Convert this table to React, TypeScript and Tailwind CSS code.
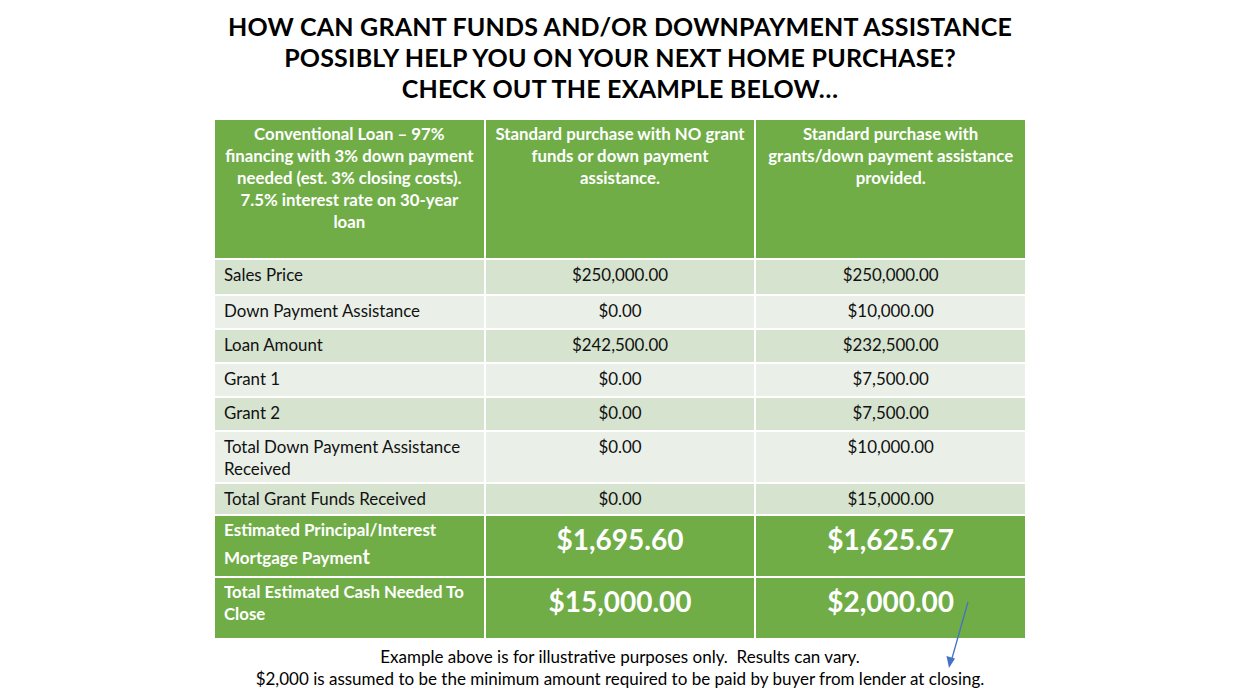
const rows: { label: React.ReactNode; key: string; a: string; b: string; h: string; tone: string }[] = [
  { key: "sp", label: "Sales Price", a: "$250,000.00", b: "$250,000.00", h: "h-[34px]", tone: "bg-[#d5e3cf]" },
  { key: "dpa", label: "Down Payment Assistance", a: "$0.00", b: "$10,000.00", h: "h-[32px]", tone: "bg-[#eaf0e8]" },
  { key: "la", label: "Loan Amount", a: "$242,500.00", b: "$232,500.00", h: "h-[32px]", tone: "bg-[#d5e3cf]" },
  { key: "g1", label: "Grant 1", a: "$0.00", b: "$7,500.00", h: "h-[32px]", tone: "bg-[#eaf0e8]" },
  { key: "g2", label: "Grant 2", a: "$0.00", b: "$7,500.00", h: "h-[32px]", tone: "bg-[#d5e3cf]" },
  {
    key: "tdpa",
    label: (
      <>
        Total Down Payment Assistance
        <br />
        Received
      </>
    ),
    a: "$0.00",
    b: "$10,000.00",
    h: "h-[50px]",
    tone: "bg-[#eaf0e8]",
  },
  { key: "tg", label: "Total Grant Funds Received", a: "$0.00", b: "$15,000.00", h: "h-[30px]", tone: "bg-[#d5e3cf]" },
];

function HeaderCell({ children }: { children: React.ReactNode }) {
  return (
    <div className="bg-[#70ad47] h-[138px] px-1 pt-[3px] text-center text-white font-bold text-[16.8px] leading-[22px] whitespace-nowrap">
      {children}
    </div>
  );
}

export default function App() {
  return (
    <div
      className="relative w-[1240px] h-[698px] bg-white overflow-hidden"
      style={{ fontFamily: "Lato, 'Liberation Sans', sans-serif" }}
    >
      <h1 className="pt-[11px] text-center font-bold text-[25px] leading-[31px] text-black tracking-[0.2px]">
        HOW CAN GRANT FUNDS AND/OR DOWNPAYMENT ASSISTANCE
        <br />
        POSSIBLY HELP YOU ON YOUR NEXT HOME PURCHASE?
        <br />
        CHECK OUT THE EXAMPLE BELOW…
      </h1>

      <div className="mt-[16px] mx-auto w-[810px] grid grid-cols-3 gap-x-[2px] gap-y-[2px]">
        <HeaderCell>
          Conventional Loan – 97%
          <br />
          financing with 3% down payment
          <br />
          needed (est. 3% closing costs).
          <br />
          7.5% interest rate on 30-year
          <br />
          loan
        </HeaderCell>
        <HeaderCell>
          Standard purchase with NO grant
          <br />
          funds or down payment
          <br />
          assistance.
        </HeaderCell>
        <HeaderCell>
          Standard purchase with
          <br />
          grants/down payment assistance
          <br />
          provided.
        </HeaderCell>

        {rows.map((r) => (
          <>
            <div key={r.key + "l"} className={`${r.tone} ${r.h} pl-[9px] pt-[4px] text-[16.9px] leading-[22px] text-[#111] whitespace-nowrap`}>
              {r.label}
            </div>
            <div key={r.key + "a"} className={`${r.tone} ${r.h} pt-[4px] text-center text-[16.9px] leading-[22px] text-[#111]`}>
              {r.a}
            </div>
            <div key={r.key + "b"} className={`${r.tone} ${r.h} pt-[4px] text-center text-[16.9px] leading-[22px] text-[#111]`}>
              {r.b}
            </div>
          </>
        ))}

        <div className="bg-[#70ad47] h-[60px] pl-[9px] pt-0 text-white font-bold text-[17px] leading-[27px] whitespace-nowrap">
          Estimated Principal/Interest
          <br />
          Mortgage Paymen<span className="text-[20px]">t</span>
        </div>
        <div className="bg-[#70ad47] h-[60px] pt-[5px] text-center text-white font-bold text-[28px] leading-[36px]">
          $1,695.60
        </div>
        <div className="bg-[#70ad47] h-[60px] pt-[5px] text-center text-white font-bold text-[28px] leading-[36px]">
          $1,625.67
        </div>

        <div className="bg-[#70ad47] h-[60px] pl-[9px] pt-[3px] text-white font-bold text-[16.8px] leading-[22px] whitespace-nowrap">
          Total Estimated Cash Needed To
          <br />
          Close
        </div>
        <div className="bg-[#70ad47] h-[60px] pt-[5px] text-center text-white font-bold text-[28px] leading-[36px]">
          $15,000.00
        </div>
        <div className="bg-[#70ad47] h-[60px] pt-[5px] text-center text-white font-bold text-[28px] leading-[36px]">
          $2,000.00
        </div>
      </div>

      <div className="mt-[8px] text-center text-[17px] leading-[22px] text-black">
        Example above is for illustrative purposes only.&nbsp; Results can vary.
        <br />
        $2,000 is assumed to be the minimum amount required to be paid by buyer from lender at closing.
      </div>

      <svg className="absolute left-[940px] top-[598px]" width="40" height="74" viewBox="0 0 40 74">
        <line x1="28" y1="4" x2="11.5" y2="62" stroke="#4472c4" strokeWidth="1.3" />
        <polygon points="9,70 6.5,58 15,60.5" fill="#4472c4" />
      </svg>
    </div>
  );
}
